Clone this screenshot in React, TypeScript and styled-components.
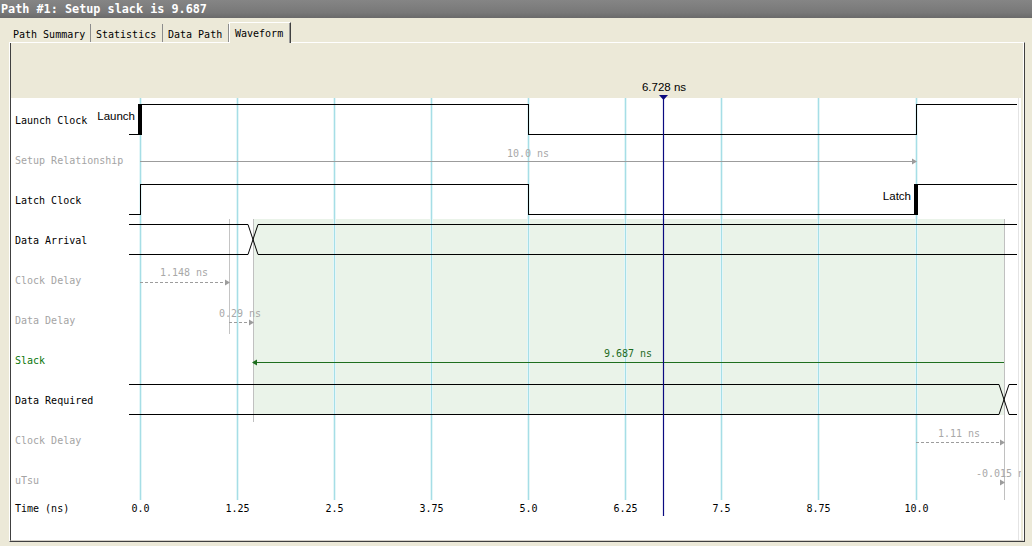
import React from "react";
import styled, { createGlobalStyle } from "styled-components";

const MONO = `"DejaVu Sans Mono", "Liberation Mono", monospace`;
const SANS = `"Liberation Sans", Arial, sans-serif`;

const GlobalStyle = createGlobalStyle`
  html, body { margin: 0; padding: 0; background: #ece9d8; }
  body { width: 1032px; height: 546px; overflow: hidden; font-family: ${MONO}; }
`;

const Window = styled.div`
  width: 1032px;
  height: 546px;
  display: flex;
  flex-direction: column;
  background: #ece9d8;
`;

const TitleBar = styled.div`
  height: 18px;
  flex: none;
  display: flex;
  align-items: center;
  padding-left: 1px;
  background: linear-gradient(#858585, #787878 70%, #6a6a6a);
  color: #ffffff;
  font: bold 11.8px ${MONO};
  white-space: pre;
`;

const TabStrip = styled.div`
  height: 24px;
  flex: none;
  display: flex;
  align-items: flex-end;
  padding-left: 8px;
`;

const Tab = styled.div<{ $w: number; $active?: boolean }>`
  box-sizing: border-box;
  width: ${(p) => p.$w}px;
  height: ${(p) => (p.$active ? 21 : 18)}px;
  margin-bottom: ${(p) => (p.$active ? -1 : 0)}px;
  position: relative;
  z-index: ${(p) => (p.$active ? 2 : 1)};
  display: flex;
  align-items: center;
  padding-left: 5px;
  padding-top: ${(p) => (p.$active ? 0 : 2)}px;
  font: 10px ${MONO};
  color: #000;
  white-space: pre;
  background: #ece9d8;
  border-right: 1px solid ${(p) => (p.$active ? "#404040" : "#8c8c8c")};
  border-left: ${(p) => (p.$active ? "1px solid #ffffff" : "none")};
  border-top: ${(p) => (p.$active ? "1px solid #ffffff" : "none")};
  box-shadow: ${(p) => (p.$active ? "inset -1px 0 0 #9a9a9a" : "1px 0 0 #ffffff")};
`;

const Panel = styled.div`
  box-sizing: border-box;
  margin-left: 9px;
  width: 1016px;
  height: 500px;
  flex: none;
  border: 1px solid;
  border-color: #ffffff #404040 #404040 #ffffff;
  display: flex;
`;

const Sunken = styled.div`
  flex: 1;
  display: grid;
  grid-template-columns: 118px 1fr;
  border-left: 1px solid #404040;
  border-right: 1px solid #ffffff;
  border-bottom: 1px solid #d4d0c8;
  min-width: 0;
`;

const LabelColumn = styled.div`
  display: flex;
  flex-direction: column;
`;

const RulerSpacer = styled.div`
  height: 55px;
  flex: none;
  background: #ece9d8;
`;

const LabelList = styled.div`
  flex: 1;
  background: #ffffff;
  padding-top: 2px;
  display: flex;
  flex-direction: column;
`;

const Label = styled.div<{ $tone: "main" | "dim" | "slack"; $h?: number }>`
  height: ${(p) => p.$h ?? 40}px;
  flex: none;
  display: flex;
  align-items: center;
  padding-left: 4px;
  font: 10px ${MONO};
  white-space: pre;
  color: ${(p) => (p.$tone === "main" ? "#000000" : p.$tone === "slack" ? "#0a760a" : "#a4a4a4")};
`;

const Chart = styled.svg`
  display: block;
  width: 892px;
  height: 496px;
  overflow: visible;
`;

const labels: { text: string; tone: "main" | "dim" | "slack" }[] = [
  { text: "Launch Clock", tone: "main" },
  { text: "Setup Relationship", tone: "dim" },
  { text: "Latch Clock", tone: "main" },
  { text: "Data Arrival", tone: "main" },
  { text: "Clock Delay", tone: "dim" },
  { text: "Data Delay", tone: "dim" },
  { text: "Slack", tone: "slack" },
  { text: "Data Required", tone: "main" },
  { text: "Clock Delay", tone: "dim" },
  { text: "uTsu", tone: "dim" },
];

const ticks: [string, number][] = [
  ["0.0", 140],
  ["1.25", 237],
  ["2.5", 334],
  ["3.75", 431],
  ["5.0", 528],
  ["6.25", 625],
  ["7.5", 721],
  ["8.75", 818],
  ["10.0", 916],
];

const GRAY = "#9c9c9c";
const DIM_TEXT = "#a8a8a8";

const arrowRight = (x: number, y: number) => `${x},${y} ${x - 5},${y - 3} ${x - 5},${y + 3}`;
const arrowLeft = (x: number, y: number) => `${x},${y} ${x + 5},${y - 3} ${x + 5},${y + 3}`;

const bus = (t: number, b: number, xc: number) =>
  `M129 ${t} H${xc - 5} L${xc + 5} ${b} H1017 M129 ${b} H${xc - 5} L${xc + 5} ${t} H1017`;

function Waveform() {
  return (
    <Chart viewBox="129 43 892 496">
      <defs>
        <clipPath id="wave-clip">
          <rect x={129} y={43} width={889} height={496} />
        </clipPath>
        <clipPath id="text-clip">
          <rect x={129} y={43} width={892} height={496} />
        </clipPath>
      </defs>
      <rect x={129} y={43} width={892} height={55} fill="#ece9d8" />
      <rect x={129} y={98} width={892} height={442} fill="#ffffff" />
      <line x1={1018.5} y1={98} x2={1018.5} y2={540} stroke="#e4e4e4" />

      <g clipPath="url(#wave-clip)" shapeRendering="crispEdges">
        <rect x={253} y={219} width={751} height={196} fill="#eaf3e9" />

        {ticks.map(([, x]) => (
          <g key={x}>
            <rect x={x - 1} y={98} width={3} height={402} fill="#e4f6f8" />
            <line x1={x + 0.5} y1={98} x2={x + 0.5} y2={500} stroke="#a6dee6" />
          </g>
        ))}

        <line x1={229.5} y1={219} x2={229.5} y2={334} stroke="#c4c4c4" />
        <line x1={253.5} y1={219} x2={253.5} y2={422} stroke="#c0c0c0" />
        <line x1={1004.5} y1={219} x2={1004.5} y2={500} stroke="#c0c0c0" />
      </g>

      {/* Launch tag lies over the label column */}
      <text x={135} y={116} textAnchor="end" dominantBaseline="central" fontFamily={SANS} fontSize={11.5} fill="#000">
        Launch
      </text>

      <g clipPath="url(#wave-clip)">
        {/* Launch clock */}
        <path
          d="M129 134.5 H140.5 V104.5 H528.5 V134.5 H916.5 V104.5 H1017"
          fill="none"
          stroke="#000"
          strokeWidth={1}
          shapeRendering="crispEdges"
        />
        <rect x={138} y={104} width={4} height={31} fill="#000" />

        {/* Setup relationship */}
        <line x1={140} y1={161.5} x2={912} y2={161.5} stroke={GRAY} shapeRendering="crispEdges" />
        <polygon points={arrowRight(917, 161.5)} fill={GRAY} />
        <text x={528} y={153} textAnchor="middle" dominantBaseline="central" fontFamily={MONO} fontSize={10} fill={DIM_TEXT}>
          10.0 ns
        </text>

        {/* Latch clock */}
        <path
          d="M129 214.5 H140.5 V184.5 H528.5 V214.5 H916.5 V184.5 H1017"
          fill="none"
          stroke="#000"
          strokeWidth={1}
          shapeRendering="crispEdges"
        />
        <rect x={914} y={184} width={4} height={31} fill="#000" />
        <text x={911} y={196} textAnchor="end" dominantBaseline="central" fontFamily={SANS} fontSize={11.5} fill="#000">
          Latch
        </text>

        {/* Data arrival */}
        <path d={bus(224.5, 254.5, 253)} fill="none" stroke="#000" strokeWidth={1} />

        {/* Clock delay (launch) */}
        <line x1={140} y1={282.5} x2={225} y2={282.5} stroke={GRAY} strokeDasharray="3 2" shapeRendering="crispEdges" />
        <polygon points={arrowRight(230, 282.5)} fill={GRAY} />
        <text x={184} y={272} textAnchor="middle" dominantBaseline="central" fontFamily={MONO} fontSize={10} fill={DIM_TEXT}>
          1.148 ns
        </text>

        {/* Data delay */}
        <line x1={229} y1={322.5} x2={249} y2={322.5} stroke={GRAY} strokeDasharray="3 2" shapeRendering="crispEdges" />
        <polygon points={arrowRight(254, 322.5)} fill={GRAY} />
        <text x={240} y={313} textAnchor="middle" dominantBaseline="central" fontFamily={MONO} fontSize={10} fill={DIM_TEXT}>
          0.29 ns
        </text>

        {/* Slack */}
        <line x1={257} y1={362.5} x2={1004} y2={362.5} stroke="#1e6e1e" shapeRendering="crispEdges" />
        <polygon points={arrowLeft(252, 362.5)} fill="#1e6e1e" />
        <text x={628} y={353} textAnchor="middle" dominantBaseline="central" fontFamily={MONO} fontSize={10} fill="#1e6b1e">
          9.687 ns
        </text>

        {/* Data required */}
        <path d={bus(384.5, 414.5, 1004)} fill="none" stroke="#000" strokeWidth={1} />

        {/* Clock delay (latch) */}
        <line x1={916} y1={442.5} x2={1000} y2={442.5} stroke={GRAY} strokeDasharray="3 2" shapeRendering="crispEdges" />
        <polygon points={arrowRight(1005, 442.5)} fill={GRAY} />
        <text x={959} y={433} textAnchor="middle" dominantBaseline="central" fontFamily={MONO} fontSize={10} fill={DIM_TEXT}>
          1.11 ns
        </text>

        {/* uTsu arrow */}
        <polygon points={arrowRight(1005, 482.5)} fill={GRAY} />

        {/* Time axis */}
        {ticks.map(([t, x]) => (
          <text key={t} x={x + 0.5} y={508} textAnchor="middle" dominantBaseline="central" fontFamily={MONO} fontSize={10} fill="#000">
            {t}
          </text>
        ))}
      </g>

      {/* uTsu value, cut by the view edge as in the tool */}
      <g clipPath="url(#text-clip)">
        <text x={1003} y={473} textAnchor="middle" dominantBaseline="central" fontFamily={MONO} fontSize={10} fill={DIM_TEXT}>
          -0.015 ns
        </text>
      </g>

      {/* Marker */}
      <line x1={663.5} y1={96} x2={663.5} y2={516} stroke="#0a0a80" strokeWidth={1.2} />
      <polygon points="659,95 668,95 663.5,100" fill="#0a0a80" />
      <text x={664} y={87} textAnchor="middle" dominantBaseline="central" fontFamily={SANS} fontSize={11.5} fill="#000">
        6.728 ns
      </text>
    </Chart>
  );
}

export default function App() {
  return (
    <>
      <GlobalStyle />
      <Window>
        <TitleBar>Path #1: Setup slack is 9.687</TitleBar>
        <TabStrip>
          <Tab $w={83}>Path Summary</Tab>
          <Tab $w={72}>Statistics</Tab>
          <Tab $w={66}>Data Path</Tab>
          <Tab $w={62} $active>
            Waveform
          </Tab>
        </TabStrip>
        <Panel>
          <Sunken>
            <LabelColumn>
              <RulerSpacer />
              <LabelList>
                {labels.map((l, i) => (
                  <Label key={i} $tone={l.tone}>
                    {l.text}
                  </Label>
                ))}
                <Label $tone="main" $h={16}>
                  Time (ns)
                </Label>
              </LabelList>
            </LabelColumn>
            <Waveform />
          </Sunken>
        </Panel>
      </Window>
    </>
  );
}
